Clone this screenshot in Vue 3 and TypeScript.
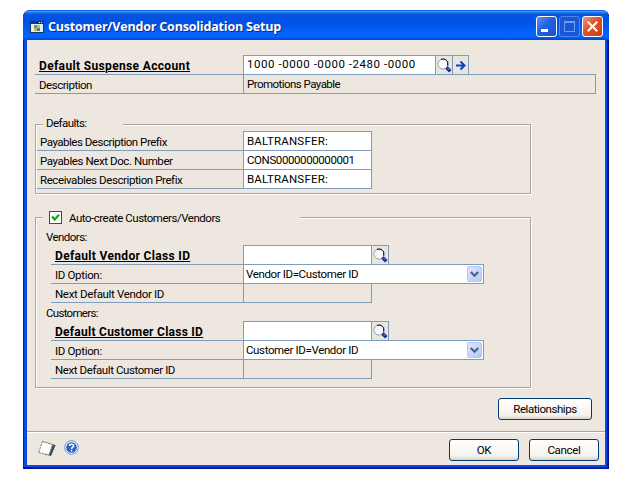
<script setup lang="ts">
import { reactive, ref } from 'vue'

interface PrefixRow {
  label: string
  value: string
  tone: string
}

interface ClassSection {
  heading: string
  headingTone: string
  classLabel: string
  classTone: string
  option: string
  nextLabel: string
  nextTone: string
}

const account = ref<string>('1000 -0000 -0000 -2480 -0000')
const autoCreate = ref<boolean>(true)

const prefixes = reactive<PrefixRow[]>([
  { label: 'Payables Description Prefix', value: 'BALTRANSFER:', tone: 'prefix' },
  { label: 'Payables Next Doc. Number', value: 'CONS0000000000001', tone: 'number' },
  { label: 'Receivables Description Prefix', value: 'BALTRANSFER:', tone: 'prefix' },
])

const sections: ClassSection[] = [
  {
    heading: 'Vendors:',
    headingTone: 'vendors',
    classLabel: 'Default Vendor Class ID',
    classTone: 'vendor-class',
    option: 'Vendor ID=Customer ID',
    nextLabel: 'Next Default Vendor ID',
    nextTone: 'next-vendor',
  },
  {
    heading: 'Customers:',
    headingTone: 'customers',
    classLabel: 'Default Customer Class ID',
    classTone: 'customer-class',
    option: 'Customer ID=Vendor ID',
    nextLabel: 'Next Default Customer ID',
    nextTone: 'next-customer',
  },
]
</script>

<template>
  <main class="window">
    <header class="titlebar">
      <svg class="app-icon" width="14" height="12" viewBox="0 0 14 12" shape-rendering="crispEdges">
        <rect width="14" height="12" fill="#17346f" />
        <rect x="1" y="3" width="12" height="8" fill="#e9edf0" />
        <rect x="9" y="1" width="1" height="1" fill="#fff" />
        <rect x="11" y="1" width="1" height="1" fill="#fff" />
        <rect x="4" y="4" width="3" height="3" fill="#3b9bc4" />
        <rect x="7" y="4" width="3" height="3" fill="#e3b92e" />
        <rect x="4" y="7" width="3" height="3" fill="#d9b53b" />
        <rect x="7" y="7" width="3" height="3" fill="#2a86b8" />
      </svg>
      <h1 class="title">Customer/Vendor Consolidation Setup</h1>
      <div class="controls">
        <button class="control" aria-label="Minimize">
          <svg width="19" height="19" viewBox="0 0 19 19"><rect x="4" y="12" width="7" height="3" fill="#fff" /></svg>
        </button>
        <button class="control dim" aria-label="Maximize">
          <svg width="19" height="19" viewBox="0 0 19 19" shape-rendering="crispEdges">
            <path d="M4.5 5v9.500h10V5" fill="none" stroke="#6f9df2" />
            <rect x="4" y="4" width="11" height="2" fill="#6f9df2" />
          </svg>
        </button>
        <button class="control close" aria-label="Close">
          <svg width="19" height="19" viewBox="0 0 19 19"><path d="M4.700 4.700l9.600 9.600M14.300 4.700l-9.600 9.600" stroke="#fff" stroke-width="2.100" /></svg>
        </button>
      </div>
    </header>

    <section class="client">
      <div class="account">
        <div class="row first">
          <div class="label bold"><span class="suspense">Default Suspense Account</span></div>
          <div class="field account-field"><span class="account-number">{{ account }}</span></div>
          <button class="lookup" aria-label="Lookup">
            <svg width="16" height="18" viewBox="0 0 16 18">
              <circle cx="7" cy="8" r="5" fill="#f8f8ff" stroke="#8a8a98" stroke-dasharray="2 .5" />
              <path d="M5 3.200h4l2.700 2.500v4" fill="none" stroke="#111" />
              <path d="M10.500 11.500l3.800 3.800" stroke="#102a9c" stroke-width="3.400" />
              <path d="M11.500 12l2 2" stroke="#7392e8" />
            </svg>
          </button>
          <button class="lookup goto" aria-label="Go to">
            <svg width="15" height="18" viewBox="0 0 15 18"><path d="M3 9.500h8M7.500 5.500l4 4-4 4" fill="none" stroke="#1044b0" stroke-width="2" /></svg>
          </button>
        </div>
        <div class="row">
          <div class="label"><span class="description">Description</span></div>
          <div class="field wide"><span class="promotions">Promotions Payable</span></div>
        </div>
      </div>

      <section class="group defaults">
        <div class="legend"><span class="defaults-text">Defaults:</span></div>
        <div class="rows">
          <div v-for="(row, i) in prefixes" :key="row.label" class="row" :class="{ first: i === 0 }">
            <div class="label"><span :class="`prefix-label-${i}`">{{ row.label }}</span></div>
            <div class="field editable"><span :class="row.tone">{{ row.value }}</span></div>
          </div>
        </div>
      </section>

      <section class="group auto">
        <div class="legend">
          <span class="check" role="checkbox" :aria-checked="autoCreate" @click="autoCreate = !autoCreate">
            <svg v-if="autoCreate" width="11" height="11" viewBox="0 0 11 11"><path d="M2 4.500l2.700 3L9 2.800" fill="none" stroke="#21a121" stroke-width="2.200" /></svg>
          </span>
          <span class="auto-text">Auto-create Customers/Vendors</span>
        </div>
        <div v-for="section in sections" :key="section.heading" class="section">
          <div class="heading"><span :class="section.headingTone">{{ section.heading }}</span></div>
          <div class="rows">
            <div class="row first">
              <div class="label bold"><span :class="section.classTone">{{ section.classLabel }}</span></div>
              <div class="field editable"></div>
              <button class="lookup" aria-label="Lookup">
                <svg width="16" height="18" viewBox="0 0 16 18">
                  <circle cx="7" cy="8" r="5" fill="#f8f8ff" stroke="#8a8a98" stroke-dasharray="2 .5" />
                  <path d="M5 3.200h4l2.700 2.500v4" fill="none" stroke="#111" />
                  <path d="M10.500 11.500l3.800 3.800" stroke="#102a9c" stroke-width="3.400" />
                  <path d="M11.500 12l2 2" stroke="#7392e8" />
                </svg>
              </button>
            </div>
            <div class="row">
              <div class="label"><span class="id-option">ID Option:</span></div>
              <div class="field combo">
                <span class="option">{{ section.option }}</span>
                <button class="drop" aria-label="Open list">
                  <svg width="9" height="7" viewBox="0 0 9 7"><path d="M.8 1l3.700 3.700L8.200 1" fill="none" stroke="#4d6185" stroke-width="2.200" /></svg>
                </button>
              </div>
            </div>
            <div class="row">
              <div class="label"><span :class="section.nextTone">{{ section.nextLabel }}</span></div>
              <div class="field"></div>
            </div>
          </div>
        </div>
      </section>

      <div class="actions"><button class="push relations"><span class="relations-text">Relationships</span></button></div>
    </section>

    <footer class="footer">
      <svg class="note" width="20" height="18" viewBox="0 0 20 18">
        <path d="M6 1.500L18.500 5 14 15.500 8 15z" fill="#6c787e" />
        <path d="M5.500 1.500L15.500 4.500 12 15 1.500 12.500z" fill="#fff" stroke="#697278" stroke-dasharray="2 1" />
        <path d="M17.500 5L13 15.500" stroke="#3f4d55" stroke-width="2" />
      </svg>
      <svg class="help" width="15" height="15" viewBox="0 0 15 15">
        <circle cx="7.500" cy="7.500" r="6.800" fill="#f2f6ff" stroke="#5f91e2" />
        <circle cx="7.500" cy="7.500" r="5.300" fill="#2860c6" />
        <path d="M5.400 6C5.400 3.700 9.600 3.700 9.600 5.900 9.600 7.300 7.500 7.200 7.500 9" fill="none" stroke="#fff" stroke-width="1.600" />
        <rect x="6.700" y="9.900" width="1.600" height="1.500" fill="#fff" />
      </svg>
      <div class="confirm">
        <button class="push"><span class="ok">OK</span></button>
        <button class="push"><span class="cancel">Cancel</span></button>
      </div>
    </footer>
  </main>
</template>

<style>
body {
  margin: 0;
  background: #fff;
}
</style>

<style scoped>
* {
  box-sizing: border-box;
}

.window {
  width: 586px;
  height: 459px;
  margin: 10px 0 0 23px;
  display: flex;
  flex-direction: column;
  padding: 0 4px 4px;
  border-radius: 7px 7px 0 0;
  background: #0a48e8;
  box-shadow: inset 1px 0 #0019cf, inset -1px -1px #00138c, inset -2px -2px #001ea0;
  font: 11.5px/14px Roboto, "Liberation Sans", sans-serif;
  letter-spacing: -0.45px;
  color: #000;
  white-space: nowrap;
}

button {
  padding: 0;
  font: inherit;
  letter-spacing: inherit;
  color: inherit;
}

.titlebar {
  flex: 0 0 30px;
  display: flex;
  align-items: center;
  margin: 0 -4px;
  padding: 3px 6px 0 7px;
  border-radius: 7px 7px 0 0;
  background: linear-gradient(#0058e6 0, #3a93ff 5%, #0855dd 14%, #0050e3 30%, #0054ea 50%, #0162fb 75%, #0065ff 88%, #0148d0 100%);
}

.title {
  margin: 0 0 0 4px;
  font: bold 12.5px/20px "Open Sans", sans-serif;
  letter-spacing: -0.19px;
  color: #fff;
  text-shadow: 1px 1px #0a2a86;
}

.controls {
  display: flex;
  gap: 2px;
  margin-left: auto;
}

.control {
  width: 21px;
  height: 21px;
  display: flex;
  border: 1px solid #fff;
  border-radius: 3px;
  background: linear-gradient(135deg, #5e93f5, #2361e0 45%, #1a50cc);
}

.control.dim {
  border-color: #4d86ee;
  background: #1956d8;
}

.control.close {
  background: linear-gradient(135deg, #ee9b80, #e0502a 45%, #c8401a);
}

.client {
  flex: 1;
  display: flex;
  flex-direction: column;
  padding: 16px 9px 10px 8px;
  background: #eee7df;
}

.row {
  height: 19px;
  display: flex;
}

.label {
  width: 206px;
  flex: none;
  padding: 3px 0 0 3px;
  border-bottom: 1px solid #7f9db9;
}

.account .label {
  width: 208px;
  padding-left: 4px;
}

.section .label {
  width: 192px;
  padding-left: 4px;
}

.label.bold {
  font: bold 12px/14px Roboto, "Liberation Sans", sans-serif;
}

.label.bold span {
  text-decoration: underline;
  text-underline-offset: 1px;
  text-decoration-thickness: 1px;
}

.field {
  width: 129px;
  height: 19px;
  padding: 2px 0 0 3px;
  border: solid #7f9db9;
  border-width: 0 1px 1px;
}

.first .field,
.first .lookup,
.field.wide,
.field.combo {
  height: 20px;
  margin-top: -1px;
  border-top-width: 1px;
}

.editable,
.combo,
.account-field {
  background: #fff;
}

.field.account-field {
  width: 193px;
  padding-top: 1px;
}

.field.wide {
  width: 353px;
}

.lookup {
  width: 17px;
  display: flex;
  border: solid #7f9db9;
  border-width: 1px 1px 1px 0;
  background: #e9e5df;
}

.lookup.goto {
  width: 16px;
}

.group {
  width: 496px;
  display: flex;
  flex-direction: column;
  border: 1px solid #aca899;
  box-shadow: inset 1px 1px #fff, 1px 1px #fff;
}

.defaults {
  height: 70px;
  margin-top: 30px;
  padding-left: 1px;
}

.auto {
  height: 171px;
  margin-top: 23px;
}

.legend {
  height: 14px;
  display: flex;
  align-items: center;
  align-self: flex-start;
  background: #eee7df;
}

.defaults .legend {
  width: 80px;
  margin: -9px 0 2px 6px;
  padding-left: 3px;
}

.auto .legend {
  width: 257px;
  height: 15px;
  margin: -8px 0 2px 7px;
  padding-left: 6px;
}

.check {
  width: 13px;
  height: 13px;
  display: flex;
  flex: none;
  margin-right: 7px;
  border: 1px solid #1c5180;
  background: #fff;
}

.heading {
  height: 19px;
  padding: 3px 0 0 10px;
}

.section .rows {
  padding-left: 15px;
}

.field.combo {
  width: 241px;
  display: flex;
  justify-content: space-between;
  padding: 1px 1px 1px 2px;
}

.option {
  padding-top: 1px;
  letter-spacing: -0.37px;
}

.drop {
  width: 15px;
  height: 16px;
  display: flex;
  align-items: center;
  justify-content: center;
  border: 1px solid #b3c8f8;
  border-radius: 2px;
  background: linear-gradient(135deg, #dce6ff, #b5cafa);
}

.actions {
  display: flex;
  justify-content: flex-end;
  margin: 10px 4px 0 0;
}

.push {
  width: 70px;
  height: 22px;
  border: 1px solid #003c74;
  border-radius: 3px;
  background: linear-gradient(#fff, #f5f3ef 80%, #d8d2c8);
}

.relations {
  width: 94px;
}

.footer {
  height: 34px;
  flex: none;
  display: flex;
  align-items: flex-start;
  padding: 7px 6px 0 10px;
  border-top: 1px solid #aca899;
  background: #eee7df;
  box-shadow: inset 0 1px #fff;
}

.note {
  margin-top: 1px;
}

.help {
  margin: 1px 0 0 7px;
}

.confirm {
  display: flex;
  gap: 10px;
  margin-left: auto;
}

/* Tracking of the individual captions and values */
.suspense {
  letter-spacing: 0.35px;
}

.vendor-class {
  letter-spacing: 0.33px;
}

.customer-class {
  letter-spacing: 0.26px;
}

.account-number {
  letter-spacing: 0.55px;
}

.description,
.prefix-label-0,
.auto-text {
  letter-spacing: -0.48px;
}

.promotions {
  letter-spacing: -0.54px;
}

.prefix-label-1,
.prefix-label-2,
.next-customer {
  letter-spacing: -0.41px;
}

.prefix {
  letter-spacing: 0.2px;
}

.number {
  letter-spacing: -0.4px;
}

.defaults-text,
.vendors {
  letter-spacing: -0.55px;
}

.customers {
  letter-spacing: -0.7px;
}

.next-vendor,
.id-option {
  letter-spacing: -0.33px;
}

.relations-text {
  letter-spacing: -0.45px;
}

.ok {
  letter-spacing: -0.2px;
}

.cancel {
  letter-spacing: -0.3px;
}
</style>
